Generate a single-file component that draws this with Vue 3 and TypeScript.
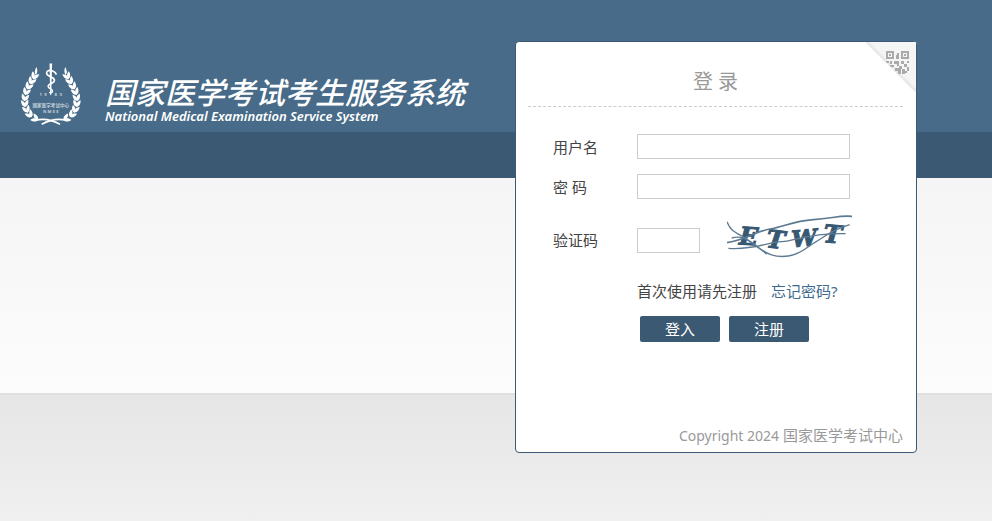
<script setup lang="ts">
import { ref } from 'vue'

interface Leaf {
  x: number
  y: number
  angle: number
}

const username = ref<string>('')
const password = ref<string>('')
const captcha = ref<string>('')

// Leaf pairs of one branch of the emblem, from tip to stem
const leaves: Leaf[] = [
  { x: 71, y: 78, angle: 24 },
  { x: 62, y: 93, angle: 28 },
  { x: 53, y: 109, angle: 28 },
  { x: 46, y: 126, angle: 20 },
  { x: 42, y: 144, angle: 10 },
  { x: 42, y: 162, angle: -4 },
  { x: 47, y: 180, angle: -18 },
  { x: 57, y: 195, angle: -38 },
  { x: 74, y: 207, angle: -62 },
]

const branches: string[] = ['', 'translate(242 0) scale(-1 1)']
</script>

<template>
  <div class="page">
    <header class="brand">
      <svg class="emblem" viewBox="27 36 189 192" aria-hidden="true">
        <g v-for="branch in branches" :key="branch" :transform="branch" fill="#fff">
          <g
            v-for="leaf in leaves"
            :key="leaf.y"
            :transform="`translate(${leaf.x} ${leaf.y}) rotate(${leaf.angle})`"
          >
            <path d="M1 9C-8 8-12 0-11-12C-5-10 0-5 1 1Z" />
            <path d="M-1 9C8 8 12 0 11-12C5-10 0-5-1 1Z" />
          </g>
          <path d="M77 50Q83 62 76 74Q68 66 77 50Z" />
          <path d="M78 211Q112 204 149 224" fill="none" stroke="#fff" stroke-width="5" />
        </g>
        <path d="M117 39H125L122 135H119Z" fill="#fff" />
        <path
          d="M138 73C132 58 108 56 108 68C108 81 133 78 132 91C131 101 112 99 113 109C114 117 127 116 126 123C125 129 119 129 117 126"
          fill="none"
          stroke="#fff"
          stroke-width="5"
        />
        <g class="emblem-text" fill="#c6d2dc" text-anchor="middle">
          <text x="90" y="139" font-size="13">1</text>
          <text x="105" y="139" font-size="13">9</text>
          <text x="136" y="139" font-size="13">8</text>
          <text x="152" y="139" font-size="13">5</text>
          <text x="121" y="172" font-size="14">国家医学考试中心</text>
          <text x="121" y="190" font-size="13">N M E E</text>
        </g>
      </svg>
      <div class="brand-names">
        <h1>国家医学考试考生服务系统</h1>
        <p>National Medical Examination Service System</p>
      </div>
    </header>

    <main class="card">
      <a class="corner" href="#" aria-label="二维码">
        <svg viewBox="0 0 50 50" width="50" height="50" aria-hidden="true">
          <defs>
            <clipPath id="fold"><path d="M0 0H50V50Z" /></clipPath>
          </defs>
          <path d="M0 0H50V50Z" fill="#f5f5f5" />
          <path d="M1 0L50 49" stroke="#e9e9e9" stroke-width="3" />
          <g clip-path="url(#fold)">
            <g fill="none" stroke="#aaa" stroke-width="2">
              <rect x="21" y="10" width="6" height="6" />
              <rect x="36" y="10" width="6" height="6" />
            </g>
            <path
              fill="#aaa"
              d="M23 12h2v2h-2zM38 12h2v2h-2zM31 11h2v2h-2zM30 13h3v4h-3zM20 19h3v2h-3zM24 19h2v3h-2zM28 19h5v5h-2v-2h-3zM35 19h3v3h-3zM41 19h2v2h-2zM38 22h3v3h-3zM24 23h4v2h-4zM33 24h3v3h-3zM41 25h2v4h-2zM29 26h6v3h-6zM36 27h3v5h-3zM32 29h3v3h-3zM39 29h2v2h-2z"
            />
          </g>
        </svg>
      </a>

      <h2 class="title">登 录</h2>

      <form class="form" @submit.prevent>
        <label for="username">用户名</label>
        <input id="username" v-model="username" type="text" autocomplete="username" />

        <label for="password">密 码</label>
        <input id="password" v-model="password" type="password" autocomplete="current-password" />

        <label for="captcha">验证码</label>
        <div class="captcha-row">
          <input id="captcha" v-model="captcha" class="short" type="text" autocomplete="off" />
          <svg class="captcha" viewBox="561 27 375 132" role="img" aria-label="验证码图片">
            <g class="captcha-text" fill="#365872" stroke="#365872" stroke-width="3">
              <text x="598" y="120" transform="rotate(4 630 95)">E</text>
              <text x="680" y="130" transform="rotate(7 710 100)">T</text>
              <text x="754" y="123" font-size="68" transform="rotate(-5 795 95)">W</text>
              <text x="850" y="114" transform="rotate(5 880 90)">T</text>
            </g>
            <g fill="none" stroke="#5c7b92" stroke-width="4">
              <path d="M561 50C570 75 585 82 605 93S655 125 680 148" />
              <path d="M561 113C620 103 650 78 690 72S760 48 820 44S895 31 936 34" stroke-width="5" />
              <path d="M565 130C640 136 680 112 725 110S800 84 917 86" />
              <path d="M575 99C610 89 630 110 655 128S705 159 745 153S800 126 825 112S870 77 929 59" />
            </g>
          </svg>
        </div>

        <p class="hint">首次使用请先注册<a href="#">忘记密码?</a></p>

        <div class="actions">
          <button type="submit">登入</button>
          <button type="button">注册</button>
        </div>
      </form>

      <footer><span class="latin">Copyright 2024</span> 国家医学考试中心</footer>
    </main>
  </div>
</template>

<style>
body {
  margin: 0;
}
</style>

<style scoped>
.page {
  box-sizing: border-box;
  min-height: 100vh;
  padding: 41px 75px 68px 20px;
  display: flex;
  justify-content: space-between;
  align-items: flex-start;
  font-family: "Noto Sans", "Noto Sans CJK SC", sans-serif;
  font-size: 15px;
  line-height: 20px;
  color: #444;
  background:
    linear-gradient(#476b88, #476b88) 0 0 / 100% 132px no-repeat,
    linear-gradient(#3b5972, #3b5972) 0 132px / 100% 46px no-repeat,
    linear-gradient(#f5f5f5, #fcfcfc) 0 178px / 100% 215px no-repeat,
    linear-gradient(#dfdfdf, #dfdfdf) 0 393px / 100% 2px no-repeat,
    linear-gradient(#e6e6e6, #f0f0f0 128px) 0 395px no-repeat;
}

.brand {
  display: flex;
  gap: 23px;
  padding-top: 21px;
  color: #fff;
  white-space: nowrap;
}

.emblem {
  width: 62px;
  height: 64px;
}

.emblem-text {
  font-weight: 700;
}

.brand-names {
  padding-top: 16px;
}

h1,
h2,
p {
  margin: 0;
}

h1 {
  font-size: 30px;
  line-height: 30px;
  font-weight: 500;
  font-style: italic;
}

.brand-names p {
  font-size: 13px;
  line-height: 16px;
  font-weight: 600;
  font-style: italic;
}

.card {
  position: relative;
  box-sizing: border-box;
  width: 402px;
  min-height: 412px;
  padding: 0 13px 6px 12px;
  display: flex;
  flex-direction: column;
  background: #fff;
  border: 1px solid #3b5972;
  border-radius: 4px;
}

.corner {
  position: absolute;
  top: 0;
  right: 0;
}

.corner svg {
  display: block;
}

.title {
  padding: 25px 0 9px;
  border-bottom: 1px dashed #ccc;
  font-size: 20px;
  line-height: 30px;
  font-weight: 400;
  color: #999;
  text-align: center;
}

.form {
  display: grid;
  grid-template-columns: 84px minmax(0, 1fr);
  align-items: center;
  row-gap: 15px;
  padding: 27px 53px 0 25px;
}

input {
  box-sizing: border-box;
  width: 100%;
  height: 25px;
  padding: 0 4px;
  border: 1px solid #ccc;
  background: #fff;
  font: inherit;
  color: inherit;
}

.short {
  flex: none;
  width: 63px;
}

.captcha-row {
  display: flex;
  align-items: center;
  gap: 27px;
  height: 52px;
}

.captcha {
  flex: none;
  align-self: flex-start;
  width: 125px;
  height: 44px;
}

.captcha-text {
  font-family: "DejaVu Serif", serif;
  font-size: 74px;
  font-weight: 700;
  font-style: italic;
}

.hint,
.actions {
  grid-column: 2;
  white-space: nowrap;
}

.hint a {
  margin-left: 14px;
  color: #3d6a90;
  text-decoration: none;
}

.actions {
  display: flex;
  gap: 9px;
  padding-left: 3px;
}

button {
  width: 80px;
  height: 26px;
  padding: 0;
  border: 0;
  border-radius: 2px;
  background: #3b5972;
  color: #fff;
  font: inherit;
  cursor: pointer;
}

footer {
  margin-top: auto;
  color: #999;
  text-align: right;
}

.latin {
  font-size: 14px;
}
</style>
